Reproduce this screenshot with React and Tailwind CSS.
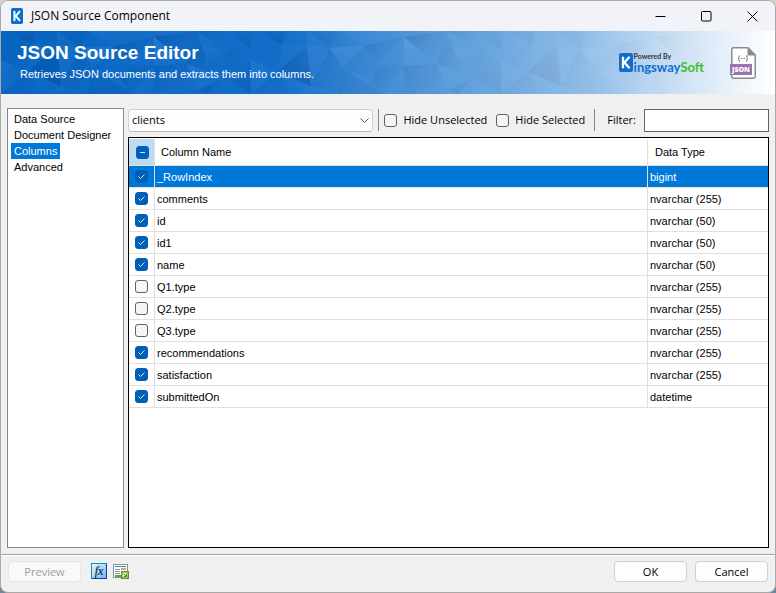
import { useEffect, useRef, useState } from "react";

const facets = [
  ["0,14 0,0 23,17", "light", 0.25],
  ["0,0 32,0 23,17", "down", 0.35],
  ["0,14 23,17 4,55", "light", 0.35],
  ["0,14 4,55 -29,41", "down", 0.7],
  ["23,17 36,37 4,55", "side", 0.55],
  ["23,17 57,15 36,37", "light", 0.6],
  ["57,15 36,37 71,33", "side", 0.35],
  ["57,15 97,6 71,33", "side", 0.8],
  ["32,0 139,0 57,15", "light", 0.25],
  ["57,15 97,6 139,0", "down", 0.35],
  ["97,6 139,0 130,33", "side", 0.85],
  ["97,6 97,35 71,33", "light", 0.35],
  ["97,6 130,33 97,35", "light", 0.55],
  ["71,33 97,35 65,50", "down", 0.35],
  ["97,35 65,50 76,63", "side", 0.5],
  ["36,37 65,50 76,63", "light", 0.4],
  ["36,37 30,63 4,55", "side", 0.5],
  ["36,37 76,63 30,63", "down", 0.2],
  ["97,35 76,63 98,63", "light", 0.35],
  ["97,35 130,33 98,63", "side", 0.5],
  ["130,33 98,63 141,59", "side", 0.7],
  ["130,33 167,47 141,59", "light", 0.4],
  ["139,0 145,15 130,33", "down", 0.3],
  ["130,33 145,15 167,47", "side", 0.6],
  ["139,0 173,0 171,19", "side", 0.3],
  ["139,0 145,15 171,19", "light", 0.25],
  ["145,15 171,19 150,33", "light", 0.35],
  ["173,0 194,19 194,0", "down", 0.5],
  ["171,19 194,29 167,47", "side", 0.3],
  ["194,29 167,47 194,63", "down", 0.4],
  ["194,29 221,41 194,63", "light", 0.35],
  ["194,29 221,41 225,13", "side", 0.25],
  ["200,0 225,13 228,0", "down", 0.6],
  ["225,13 250,14 221,41", "light", 0.2],
  ["221,41 254,55 235,63", "light", 0.25],
  ["221,41 235,63 194,63", "side", 0.55],
  ["167,47 141,59 150,63", "down", 0.5],
  ["4,55 -14,63 30,63", "light", 0.3],
];

const fills = { light: "url(#facet-light)", down: "url(#facet-down)", side: "url(#facet-side)" };

function BannerArt() {
  return (
    <svg className="absolute inset-0 h-full w-full" viewBox="0 0 774 63" preserveAspectRatio="none" aria-hidden="true">
      <defs>
        <linearGradient id="banner-base">
          <stop offset="0" stopColor="#0866c2" />
          <stop offset="0.38" stopColor="#0c6ac8" />
          <stop offset="0.58" stopColor="#1473cc" />
          <stop offset="1" stopColor="#2b82d2" />
        </linearGradient>
        <linearGradient id="banner-wash">
          <stop offset="0" stopColor="#fff" stopOpacity="0" />
          <stop offset="0.36" stopColor="#fff" stopOpacity="0.03" />
          <stop offset="0.46" stopColor="#fff" stopOpacity="0.16" />
          <stop offset="0.6" stopColor="#fff" stopOpacity="0.32" />
          <stop offset="0.75" stopColor="#fff" stopOpacity="0.5" />
          <stop offset="0.88" stopColor="#fff" stopOpacity="0.78" />
          <stop offset="1" stopColor="#fff" stopOpacity="1" />
        </linearGradient>
        <linearGradient id="facet-light" x1="0" y1="0" x2="1" y2="1">
          <stop offset="0" stopColor="#4c9ae6" stopOpacity="0.8" />
          <stop offset="1" stopColor="#2a80d8" stopOpacity="0.1" />
        </linearGradient>
        <linearGradient id="facet-down" x1="0" y1="0" x2="0" y2="1">
          <stop offset="0" stopColor="#00357f" stopOpacity="0.1" />
          <stop offset="1" stopColor="#00408c" stopOpacity="0.7" />
        </linearGradient>
        <linearGradient id="facet-side" x1="0" y1="0" x2="1" y2="1">
          <stop offset="0" stopColor="#003f8c" stopOpacity="0.65" />
          <stop offset="1" stopColor="#2a80d8" stopOpacity="0.25" />
        </linearGradient>
        <g id="facet-tile" opacity="0.8">
          {facets.map(([points, kind, opacity]) => (
            <polygon key={points} points={points} fill={fills[kind]} opacity={opacity} />
          ))}
        </g>
      </defs>
      <rect width="774" height="63" fill="url(#banner-base)" />
      {[-194, 56, 306, 556].map((x) => (
        <use key={x} href="#facet-tile" x={x} />
      ))}
      <rect width="774" height="63" fill="url(#banner-wash)" />
    </svg>
  );
}

function KMark({ className }) {
  return (
    <svg className={className} viewBox="0 0 14 18" aria-hidden="true" preserveAspectRatio="none">
      <rect width="14" height="18" rx="2" fill="#0f6fcf" />
      <path d="M4 3.500V14.500M10.500 3.500L5.500 9L10.500 14.500" stroke="#fff" strokeWidth="2.300" fill="none" />
    </svg>
  );
}

function JsonFile() {
  return (
    <svg className="h-8 w-[26px]" viewBox="0 0 26 32" role="img" aria-label="JSON file">
      <path d="M3.500 .8H18L25.200 8V29.500Q25.200 31.200 23.500 31.200H3.500Q1.800 31.200 1.800 29.500V2.500Q1.800 .8 3.500 .8Z" fill="#fff" stroke="#8b8b8b" strokeWidth="1.500" />
      <path d="M17.500 0L26 8.500H17.500Z" fill="#8b8b8b" />
      <path d="M10 8.500Q9 8.500 9 10V10.500Q9 11.500 8 11.500Q9 11.500 9 12.500V13Q9 14.500 10 14.500M16 8.500Q17 8.500 17 10V10.500Q17 11.500 18 11.500Q17 11.500 17 12.500V13Q17 14.500 16 14.500M11 11.500H12.500M13.500 11.500H15" fill="none" stroke="#777" />
      <rect y="17" width="22" height="11" fill="#9a74ad" />
      <text x="11" y="25" textAnchor="middle" fontFamily="Open Sans, sans-serif" fontWeight="800" fontSize="7" fill="#fff">JSON</text>
    </svg>
  );
}

function CheckBox({ mixed = false, ...props }) {
  const ref = useRef(null);
  useEffect(() => {
    ref.current.indeterminate = mixed;
  }, [mixed]);
  return (
    <span className="grid size-[13px] shrink-0">
      <input
        ref={ref}
        type="checkbox"
        className="col-start-1 row-start-1 size-[13px] appearance-none rounded-[3px] border border-[#616161] bg-[#f5f5f5] checked:border-[#005fb8] checked:bg-[#005fb8] indeterminate:border-[#005fb8] indeterminate:bg-[#005fb8]"
        {...props}
      />
      {(mixed || props.checked) && (
        <svg className="pointer-events-none col-start-1 row-start-1 size-[13px]" viewBox="0 0 13 13" fill="none" stroke="#d5e6f6" aria-hidden="true">
          <path d={mixed ? "M4 6.500H9" : "M3.500 6.500L5.500 8.500L9.500 4.500"} />
        </svg>
      )}
    </span>
  );
}

const initialRows = [
  ["_RowIndex", "bigint", true],
  ["comments", "nvarchar (255)", true],
  ["id", "nvarchar (50)", true],
  ["id1", "nvarchar (50)", true],
  ["name", "nvarchar (50)", true],
  ["Q1.type", "nvarchar (255)", false],
  ["Q2.type", "nvarchar (255)", false],
  ["Q3.type", "nvarchar (255)", false],
  ["recommendations", "nvarchar (255)", true],
  ["satisfaction", "nvarchar (255)", true],
  ["submittedOn", "datetime", true],
].map(([name, type, checked]) => ({ name, type, checked }));

function ColumnTable() {
  const [rows, setRows] = useState(initialRows);
  const all = rows.every((r) => r.checked);
  const some = rows.some((r) => r.checked);
  const toggle = (name) => setRows(rows.map((r) => (r.name === name ? { ...r, checked: !r.checked } : r)));
  return (
    <div className="min-h-0 flex-1 overflow-auto border border-black bg-white pt-px">
      <table className="w-full table-fixed border-separate border-spacing-0 text-left">
        <colgroup>
          <col className="w-[26px]" />
          <col />
          <col className="w-[120px]" />
        </colgroup>
        <thead>
          <tr className="h-[27px]">
            <th className="border-r border-b border-[#e0e0e0] bg-[#bcdcf4] p-0 pl-[7px]">
              <CheckBox aria-label="Select all columns" mixed={some && !all} checked={all} onChange={() => setRows(rows.map((r) => ({ ...r, checked: !all })))} />
            </th>
            <th className="border-r border-b border-[#e0e0e0] p-0 pl-1.5 font-normal">Column Name</th>
            <th className="border-b border-[#e0e0e0] p-0 pl-[7px] font-normal">Data Type</th>
          </tr>
        </thead>
        <tbody>
          {rows.map((r, i) => (
            <tr key={r.name} className={i === 0 ? "h-[22px] bg-[#0078d7] text-white" : "h-[22px]"}>
              <td className="border-r border-b border-[#e0e0e0] p-0 pl-1.5">
                <CheckBox aria-label={r.name} checked={r.checked} onChange={() => toggle(r.name)} />
              </td>
              <td className="border-r border-b border-[#e0e0e0] p-0 pl-0.5">{r.name}</td>
              <td className="border-b border-[#e0e0e0] p-0 pl-0.5">{r.type}</td>
            </tr>
          ))}
        </tbody>
      </table>
    </div>
  );
}

function Toolbar() {
  const [hideUnselected, setHideUnselected] = useState(false);
  const [hideSelected, setHideSelected] = useState(false);
  return (
    <div className="flex h-6 items-center font-['Open_Sans','Noto_Sans',sans-serif]">
      <div className="grid min-w-0 flex-1 items-center">
        <select aria-label="Document" className="col-start-1 row-start-1 h-[23px] w-full appearance-none rounded-[4px] border border-[#d0d0d0] border-b-[#b8b8b8] bg-[#fdfdfd] pl-[3px]">
          <option>clients</option>
        </select>
        <svg className="pointer-events-none col-start-1 row-start-1 mr-1 h-[5px] w-[9px] justify-self-end" viewBox="0 0 9 5" fill="none" stroke="#555" aria-hidden="true">
          <path d="M.5 .5L4.500 4.500L8.500 .5" />
        </svg>
      </div>
      <span className="ml-[5px] h-[22px] w-px bg-[#838383]" />
      <label className="ml-[5px] flex items-center gap-1.5">
        <CheckBox checked={hideUnselected} onChange={() => setHideUnselected(!hideUnselected)} />
        Hide Unselected
      </label>
      <label className="ml-[9px] flex items-center gap-1.5">
        <CheckBox checked={hideSelected} onChange={() => setHideSelected(!hideSelected)} />
        Hide Selected
      </label>
      <span className="ml-[9px] h-[22px] w-px bg-[#838383]" />
      <label htmlFor="filter" className="ml-3">Filter:</label>
      <input id="filter" className="ml-2 h-[23px] w-[125px] border border-[#646464] bg-white px-1 outline-none" />
    </div>
  );
}

const pages = ["Data Source", "Document Designer", "Columns", "Advanced"];
const dialogButton = "h-[21px] w-[73px] rounded-[4px] border font-['Open_Sans','Noto_Sans',sans-serif] leading-[19px]";

export default function App() {
  return (
    <div className="h-screen bg-gradient-to-b from-[#d9d3c8] to-[#6f8ba0] font-['Liberation_Sans',Arial,sans-serif] text-[11px] leading-4 text-black">
      <main className="flex h-full flex-col overflow-hidden rounded-lg border border-[#aba9a5] bg-[#f0f0f0]">
        <header className="flex h-[30px] shrink-0 items-center bg-[#f1f3f9] pl-2.5">
          <KMark className="h-4 w-3" />
          <h1 className="ml-2 flex-1 font-['Open_Sans','Noto_Sans',sans-serif] text-[12px]">JSON Source Component</h1>
          <button aria-label="Minimize" className="grid h-full w-[46px] place-items-center">
            <svg className="size-[11px]" viewBox="0 0 11 11" stroke="#000" fill="none"><path d="M.5 5.500H10.500" /></svg>
          </button>
          <button aria-label="Maximize" className="grid h-full w-[46px] place-items-center">
            <svg className="size-[11px]" viewBox="0 0 11 11" stroke="#000" fill="none"><rect x=".5" y=".5" width="9.500" height="9.500" rx="1" /></svg>
          </button>
          <button aria-label="Close" className="grid h-full w-[46px] place-items-center">
            <svg className="size-[11px]" viewBox="0 0 11 11" stroke="#000" fill="none"><path d="M.5 .5L10.500 10.500M10.500 .5L.5 10.500" /></svg>
          </button>
        </header>

        <section className="relative h-[63px] shrink-0">
          <BannerArt />
          <div className="relative flex h-full items-center text-white">
            <div className="flex-1 pl-4">
              <h2 className="text-[19px] leading-[22px] font-bold">JSON Source Editor</h2>
              <p className="pl-[3px] leading-5">Retrieves JSON documents and extracts them into columns.</p>
            </div>
            <div className="flex items-center font-[Lato,'Open_Sans',sans-serif] font-bold">
              <KMark className="h-[19px] w-[14px]" />
              <div className="ml-px">
                <div className="text-[7px] leading-[8px] text-[#333]">Powered By</div>
                <div className="text-[13px] leading-[14px] text-[#0f6fcf]">
                  ingsway<span className="text-[#3cc02c]">Soft</span>
                </div>
              </div>
            </div>
            <div className="mr-[19px] ml-[26px]">
              <JsonFile />
            </div>
          </div>
        </section>

        <div className="flex min-h-0 flex-1 gap-1 px-1.5 pt-3.5 pb-1.5">
          <nav className="w-[117px] shrink-0 border border-[#828790] bg-white px-[3px] pt-0.5">
            <ul>
              {pages.map((page) => (
                <li key={page} className="flex">
                  <button className={page === "Columns" ? "bg-[#0078d7] px-[3px] whitespace-nowrap text-white" : "px-[3px] whitespace-nowrap"}>{page}</button>
                </li>
              ))}
            </ul>
          </nav>
          <div className="flex min-w-0 flex-1 flex-col gap-[5px]">
            <Toolbar />
            <ColumnTable />
          </div>
        </div>

        <footer className="flex h-[38px] shrink-0 items-center border-t border-[#a0a0a0] px-[7px] pb-[5px] shadow-[inset_0_1px_0_#fff]">
          <button disabled className={`${dialogButton} border-[#e5e5e5] bg-[#f9f9f9] text-[#9d9d9d]`}>Preview</button>
          <button aria-label="Expressions" className="ml-2.5">
            <svg className="size-4" viewBox="0 0 16 16">
              <defs>
                <linearGradient id="fx-fill" x1="0" y1="0" x2="1" y2="1">
                  <stop offset="0" stopColor="#e6fbff" />
                  <stop offset="1" stopColor="#6cb6f2" />
                </linearGradient>
              </defs>
              <rect x=".5" y=".5" width="15" height="15" fill="url(#fx-fill)" stroke="#1c86c8" />
              <path d="M15.500 1V15.500H1" fill="none" stroke="#0a3fa4" />
              <text x="8" y="11.500" textAnchor="middle" fontFamily="Liberation Serif, serif" fontStyle="italic" fontSize="12" fill="#15253a" stroke="#15253a" strokeWidth=".2">fx</text>
            </svg>
          </button>
          <button aria-label="Output settings" className="ml-1.5">
            <svg className="size-4" viewBox="0 0 16 16" fill="none">
              <rect x=".5" y="1.500" width="14" height="13" fill="#fff" stroke="#8095a8" />
              <path d="M2 3.500H13" stroke="#2d86d2" />
              <path d="M2 6.500H7M2 8.500H7M2 10.500H7" stroke="#8a97a4" />
              <path d="M8 6H13" stroke="#e6a33c" strokeWidth="2" />
              <path d="M2 13H8" stroke="#6d9e2e" strokeWidth="2" />
              <rect x="8.750" y="8.750" width="6.500" height="6.500" fill="#e6f5cc" stroke="#5a9a20" strokeWidth="1.500" />
              <path d="M10.500 10.500L13 13M13.500 10.800V13.500H10.800" stroke="#4c8a1c" />
            </svg>
          </button>
          <div className="ml-auto flex gap-2">
            <button className={`${dialogButton} border-[#d0d0d0] bg-[#fdfdfd]`}>OK</button>
            <button className={`${dialogButton} border-[#d0d0d0] bg-[#fdfdfd]`}>Cancel</button>
          </div>
        </footer>
      </main>
    </div>
  );
}
